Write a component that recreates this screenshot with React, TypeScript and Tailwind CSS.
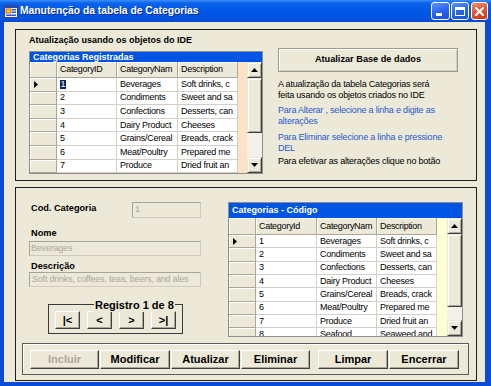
import React from "react";

const SANS = "font-['Liberation_Sans',Arial,sans-serif]";

const ROWS = [
  ["1", "Beverages", "Soft drinks, c"],
  ["2", "Condiments", "Sweet and sa"],
  ["3", "Confections", "Desserts, can"],
  ["4", "Dairy Product", "Cheeses"],
  ["5", "Grains/Cereal", "Breads, crack"],
  ["6", "Meat/Poultry", "Prepared me"],
  ["7", "Produce", "Dried fruit an"],
  ["8", "Seafood", "Seaweed and"],
];

const HEAD = `shrink-0 bg-[#ece9d8] border-r border-b border-[#aca899] shadow-[inset_1px_1px_0_#fff] text-[9px] tracking-[-0.3px] leading-none text-black pl-[3px] flex items-center overflow-hidden whitespace-nowrap ${SANS}`;
const ROWHEAD = "shrink-0 w-[27px] bg-[#ece9d8] border-r border-b border-[#aca899] shadow-[inset_1px_1px_0_#fff] flex items-center";
const CELL = `shrink-0 bg-white border-r border-b border-[#d4d0c8] text-[9px] tracking-[-0.25px] leading-none text-black pl-[3px] flex items-center overflow-hidden whitespace-nowrap ${SANS}`;
const BEVEL = "bg-[#ece9d8] border border-t-[#ece9d8] border-l-[#ece9d8] border-r-[#404040] border-b-[#404040] shadow-[inset_1px_1px_0_#fff,inset_-1px_-1px_0_#aca899]";
const BTN = "bg-[#ece9d8] border border-t-white border-l-white border-r-[#404040] border-b-[#404040] shadow-[inset_-1px_-1px_0_#aca899] flex items-center justify-center";

function Scrollbar({ thumbCls }: { thumbCls: string }) {
  return (
    <div className="w-[15px] shrink-0 flex flex-col bg-[#f3f1e9]">
      <div className={`h-[16px] shrink-0 ${BEVEL} flex items-center justify-center`}>
        <svg width="7" height="4" viewBox="0 0 7 4">
          <path d="M3.5 0 L7 4 L0 4 Z" fill="#000" />
        </svg>
      </div>
      <div className={`shrink-0 ${BEVEL} ${thumbCls}`} />
      <div className="flex-1" />
      <div className={`h-[16px] shrink-0 ${BEVEL} flex items-center justify-center`}>
        <svg width="7" height="4" viewBox="0 0 7 4">
          <path d="M0 0 L7 0 L3.5 4 Z" fill="#000" />
        </svg>
      </div>
    </div>
  );
}

type GridProps = {
  caption: string;
  idLabel: string;
  outerCls: string;
  captionCls: string;
  headerCls: string;
  rowCls: string;
  fillCls: string;
  thumbCls: string;
  colW: [string, string, string];
  rows: string[][];
  highlight?: boolean;
};

function Grid(p: GridProps) {
  return (
    <div className={`flex flex-col overflow-hidden border border-[#8e8e8e] ${p.outerCls}`}>
      <div
        className={`shrink-0 bg-[#0054e3] text-white font-bold text-[9px] pl-[3px] overflow-hidden whitespace-nowrap ${SANS} ${p.captionCls}`}
      >
        {p.caption}
      </div>
      <div className="flex flex-1 min-h-0">
        <div className="flex flex-col shrink-0">
          <div className={`flex shrink-0 ${p.headerCls}`}>
            <div className={`w-[27px] ${HEAD}`} />
            <div className={`${p.colW[0]} ${HEAD}`}>{p.idLabel}</div>
            <div className={`${p.colW[1]} ${HEAD}`}>CategoryNam</div>
            <div className={`${p.colW[2]} ${HEAD}`}>Description</div>
          </div>
          {p.rows.map((r, i) => (
            <div key={i} className={`flex shrink-0 ${p.rowCls}`}>
              <div className={ROWHEAD}>
                {i === 0 && (
                  <svg className="ml-[4px]" width="4" height="7" viewBox="0 0 4 7">
                    <path d="M0 0 L4 3.5 L0 7 Z" fill="#000" />
                  </svg>
                )}
              </div>
              <div className={`${p.colW[0]} ${CELL} ${i === 0 && p.highlight ? "pl-[2px]" : ""}`}>
                {i === 0 && p.highlight ? (
                  <span className="bg-[#0a246a] text-white px-[0.5px] leading-[9px]">{r[0]}</span>
                ) : (
                  r[0]
                )}
              </div>
              <div className={`${p.colW[1]} ${CELL}`}>{r[1]}</div>
              <div className={`${p.colW[2]} ${CELL}`}>{r[2]}</div>
            </div>
          ))}
        </div>
        <div className={`flex-1 ${p.fillCls}`} />
        <Scrollbar thumbCls={p.thumbCls} />
      </div>
    </div>
  );
}

function TitleBar() {
  return (
    <div className="h-[22px] shrink-0 flex items-center bg-[linear-gradient(180deg,#3a8ff7_0%,#0c63ec_14%,#0058e6_45%,#0354e2_85%,#0a48c8_100%)]">
      <svg className="ml-[4px] shrink-0" width="14" height="13" viewBox="0 0 14 13">
        <rect x="0.5" y="0.5" width="13" height="12" fill="#f4f4f4" stroke="#404080" />
        <rect x="1" y="1" width="12" height="2" fill="#1f4fc8" />
        <rect x="2" y="4" width="5" height="4" fill="#f6d41a" stroke="#d83a20" strokeWidth="0.8" />
        <rect x="8" y="4" width="4" height="1.5" fill="#2a5ed6" />
        <rect x="8" y="6.5" width="4" height="1.5" fill="#2a5ed6" />
        <rect x="2" y="9.5" width="10" height="1.5" fill="#2a5ed6" />
      </svg>
      <div
        className={`ml-[2px] text-white font-bold text-[10.3px] leading-none ${SANS} [text-shadow:1px_1px_0_#0a2a8a]`}
      >
        Manutenção da tabela de Categorias
      </div>
      <div className="flex-1" />
      <div className="flex items-center gap-[1px] mr-[3px]">
        <div className="w-[19px] h-[18px] rounded-[3px] border border-white bg-[linear-gradient(160deg,#5d93f8_0%,#2a66ee_50%,#1a4fd8_100%)] flex items-end pl-[4px] pb-[3px]">
          <div className="w-[6px] h-[3px] bg-white" />
        </div>
        <div className="w-[18px] h-[18px] rounded-[3px] border border-white bg-[linear-gradient(160deg,#5d93f8_0%,#2a66ee_50%,#1a4fd8_100%)] flex items-center justify-center">
          <div className="w-[10px] h-[9px] border border-white border-t-[3px]" />
        </div>
        <div className="ml-[1px] w-[17px] h-[18px] rounded-[3px] border border-white bg-[linear-gradient(160deg,#f0916c_0%,#e0532e_50%,#c83c1a_100%)] flex items-center justify-center">
          <svg width="9" height="9" viewBox="0 0 9 9">
            <path d="M1 1 L8 8 M8 1 L1 8" stroke="#fff" strokeWidth="2" strokeLinecap="square" />
          </svg>
        </div>
      </div>
    </div>
  );
}

const TEXTBOX = `shrink-0 bg-[#ece9d8] border border-[#cfccbd] border-t-[#a7a597] border-l-[#a7a597] text-[#aca899] text-[9px] tracking-[-0.2px] flex items-center overflow-hidden whitespace-nowrap ${SANS}`;
const PARA = `text-[9px] tracking-[-0.2px] leading-[11px] whitespace-nowrap ${SANS}`;
const LABEL = `pl-[2px] font-bold text-[9.2px] text-black whitespace-nowrap ${SANS}`;

export default function App() {
  return (
    <div className="w-[491px] h-[386px] bg-[#0b4ad4] flex flex-col overflow-hidden">
      <TitleBar />
      <div className="flex-1 ml-[4px] mr-[6px] mb-[4px] bg-[#ece9d8] flex flex-col">
        {/* Top panel */}
        <div className="mt-[7px] ml-[11px] w-[462px] h-[152px] shrink-0 border border-[#1e1e1e] flex">
          <div className="pl-[13px] pt-[4px] flex flex-col">
            <div className={`font-bold text-[9px] leading-[13px] h-[13px] text-black whitespace-nowrap ${SANS}`}>
              Atualização usando os objetos do IDE
            </div>
            <Grid
              caption="Categorias Registradas"
              idLabel="CategoryID"
              outerCls="mt-[4px] w-[234px] h-[123px]"
              captionCls="h-[10px] leading-[10px]"
              headerCls="h-[16px]"
              rowCls="h-[13.6px]"
              fillCls="bg-[#ffe2c6]"
              thumbCls="h-[55px]"
              colW={["w-[60px]", "w-[61px]", "w-[60px]"]}
              rows={ROWS.slice(0, 7)}
              highlight
            />
          </div>
          <div className="ml-[15px] pt-[18px] flex flex-col">
            <button
              className={`w-[180px] h-[24px] shrink-0 bg-[#ece9d8] border border-[#9d9b8f] shadow-[inset_1px_1px_0_#fff,inset_-1px_-1px_0_#d2cfc0] font-bold text-[9.2px] text-black ${SANS}`}
            >
              Atualizar Base de dados
            </button>
            <div className={`mt-[7px] text-black ${PARA}`}>
              A atualização da tabela Categorias será
              <br />
              feita usando os objetos criados no IDE
            </div>
            <div className={`mt-[4px] text-[#2a5ad2] ${PARA}`}>
              Para Alterar , selecione a linha e digite as
              <br />
              alterações
            </div>
            <div className={`mt-[5px] text-[#2a5ad2] ${PARA}`}>
              Para Eliminar selecione a linha e pressione
              <br />
              DEL
            </div>
            <div className={`mt-[2px] text-black ${PARA}`}>Para efetivar as alterações clique no botão</div>
          </div>
        </div>

        {/* Bottom panel */}
        <div className="mt-[6px] ml-[11px] w-[462px] h-[194px] shrink-0 border border-[#1e1e1e] flex flex-col">
          <div className="flex">
            <div className="pl-[13px] pt-[14px] w-[185px] flex flex-col">
              <div className="flex justify-between items-start h-[16px]">
                <div className={`${LABEL} leading-[13px]`}>Cod. Categoria</div>
                <div className={`w-[69px] h-[16px] pl-[2px] ${TEXTBOX}`}>1</div>
              </div>
              <div className={`mt-[9px] leading-[12px] ${LABEL}`}>Nome</div>
              <div className={`mt-[2px] w-[172px] h-[15px] pl-[1px] ${TEXTBOX}`}>Beverages</div>
              <div className={`mt-[4px] leading-[12px] ${LABEL}`}>Descrição</div>
              <div className={`w-[172px] h-[15px] pl-[2px] ${TEXTBOX}`}>Soft drinks, coffees, teas, beers, and ales</div>
              <div className="relative mt-[17px] ml-[19px] w-[135px] h-[30px] border border-[#3a3a3a] flex items-start pl-[6px] pt-[6px] gap-[7px]">
                <div
                  className={`absolute left-[45px] top-[-7px] px-[1px] bg-[#ece9d8] font-bold text-[11px] leading-[14px] text-black whitespace-nowrap ${SANS}`}
                >
                  Registro 1 de 8
                </div>
                {["|<", "<", ">", ">|"].map((t) => (
                  <div key={t} className={`w-[25px] h-[18px] ${BTN} font-bold text-[11px] text-black ${SANS}`}>
                    {t}
                  </div>
                ))}
              </div>
            </div>
            <div className="ml-[27px] pt-[14px]">
              <Grid
                caption="Categorias - Código"
                idLabel="CategoryId"
                outerCls="w-[235px] h-[135px]"
                captionCls="h-[15px] leading-[15px]"
                headerCls="h-[17px]"
                rowCls="h-[13.33px]"
                fillCls="bg-[#ffffd6]"
                thumbCls="h-[73px]"
                colW={["w-[61px]", "w-[60px]", "w-[60px]"]}
                rows={ROWS}
              />
            </div>
          </div>
          <div className="mt-[6px] ml-[6px] w-[447px] h-[32px] border border-[#5a5a5a] shadow-[inset_1px_1px_0_#fff] flex items-start pl-[7px] pt-[6px]">
            <div className={`w-[69px] h-[19px] ${BTN} font-bold text-[11px] text-[#aca899] ${SANS}`}>Incluir</div>
            <div className={`ml-[1px] w-[70px] h-[19px] ${BTN} font-bold text-[11px] text-black ${SANS}`}>Modificar</div>
            <div className={`ml-[1px] w-[69px] h-[19px] ${BTN} font-bold text-[11px] text-black ${SANS}`}>Atualizar</div>
            <div className={`ml-[1px] w-[69px] h-[19px] ${BTN} font-bold text-[11px] text-black ${SANS}`}>Eliminar</div>
            <div className={`ml-[8px] w-[70px] h-[19px] ${BTN} font-bold text-[11px] text-black ${SANS}`}>Limpar</div>
            <div className={`ml-[1px] w-[70px] h-[19px] ${BTN} font-bold text-[11px] text-black ${SANS}`}>Encerrar</div>
          </div>
        </div>
      </div>
    </div>
  );
}
